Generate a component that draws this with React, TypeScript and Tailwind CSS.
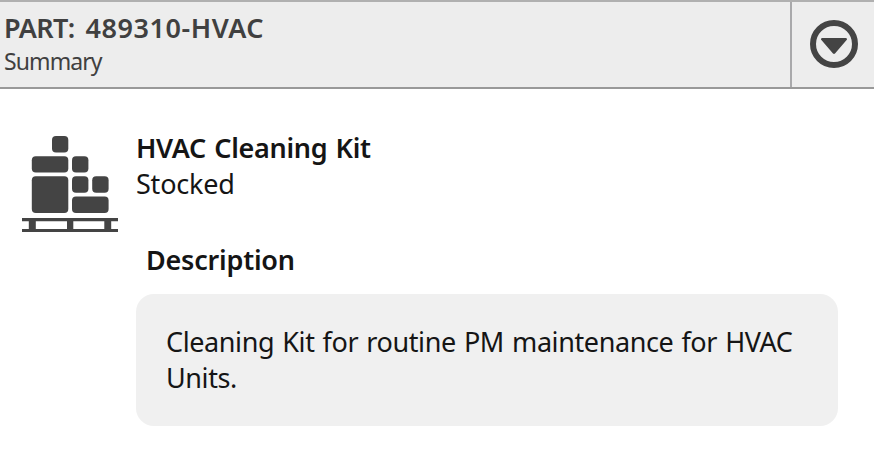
function PalletIcon() {
  return (
    <svg viewBox="0 0 96 96" className="h-24 w-24 shrink-0 fill-[#444444]">
      <rect x="30" y="0" width="16.3" height="16.5" rx="4" />
      <rect x="9.8" y="20.2" width="36.5" height="16.4" rx="4" />
      <rect x="50" y="20.2" width="16.4" height="16.4" rx="4" />
      <rect x="9.8" y="40.3" width="36.5" height="36.6" rx="4" />
      <rect x="50" y="40.3" width="16.4" height="16.4" rx="4" />
      <rect x="70.2" y="40.3" width="16.4" height="16.4" rx="4" />
      <rect x="50" y="60.4" width="36.6" height="16.5" rx="4" />
      <path d="M0 82h96v3.2h-6.8V93H96v3H0v-3h6.8v-7.8H0zM13.8 85.2V93H45v-7.8zM51.3 85.2V93h31v-7.8z" fillRule="evenodd" />
    </svg>
  );
}

function DropdownIcon() {
  return (
    <svg viewBox="0 0 48 48" className="h-12 w-12">
      <circle cx="24" cy="24" r="21" fill="none" stroke="#444444" strokeWidth="6" />
      <path
        d="M12.2 18h23.6a1.2 1.2 0 0 1 .8 2.1L25 33.6a1.5 1.5 0 0 1-2 0L11.4 20.1a1.2 1.2 0 0 1 .8-2.1z"
        fill="#444444"
      />
    </svg>
  );
}

export default function App() {
  return (
    <div className="h-[457px] w-[874px] overflow-hidden bg-white font-['Noto_Sans','Open_Sans',sans-serif] text-[#151515]">
      <header className="flex h-[89px] border-t-2 border-b-2 border-t-[#b0b0b0] border-b-[#999999] bg-[#ededed] text-[#404040]">
        <div className="flex-1 pt-2 pl-1">
          <h1 className="text-[27px] leading-9 font-semibold whitespace-nowrap">
            <span className="tracking-[-0.6px]">PART:</span>
            <span className="ml-[11px] tracking-[0.55px]">489310-HVAC</span>
          </h1>
          <p className="text-[23px] leading-[30px] tracking-[-0.9px]">Summary</p>
        </div>
        <button className="flex w-21 items-center justify-center border-l-2 border-[#a9a9ab] pb-0.5 pl-0.5">
          <DropdownIcon />
        </button>
      </header>

      <main className="flex gap-[18px] pt-[47px] pr-9 pl-[22px]">
        <PalletIcon />
        <div className="-mt-1.5 min-w-0 flex-1 text-[27px] leading-9">
          <h2 className="font-semibold tracking-[-0.3px] [word-spacing:1.5px]">HVAC Cleaning Kit</h2>
          <p className="tracking-[-0.2px]">Stocked</p>
          <h3 className="mt-10 ml-2.5 font-semibold tracking-[-0.22px]">Description</h3>
          <div className="mt-4 h-[132px] rounded-[18px] bg-[#f0f0f0] px-[30px] pt-[30px]">
            <p className="tracking-[-0.4px] [word-spacing:1.5px]">
              Cleaning Kit for routine PM maintenance for HVAC Units.
            </p>
          </div>
        </div>
      </main>
    </div>
  );
}
